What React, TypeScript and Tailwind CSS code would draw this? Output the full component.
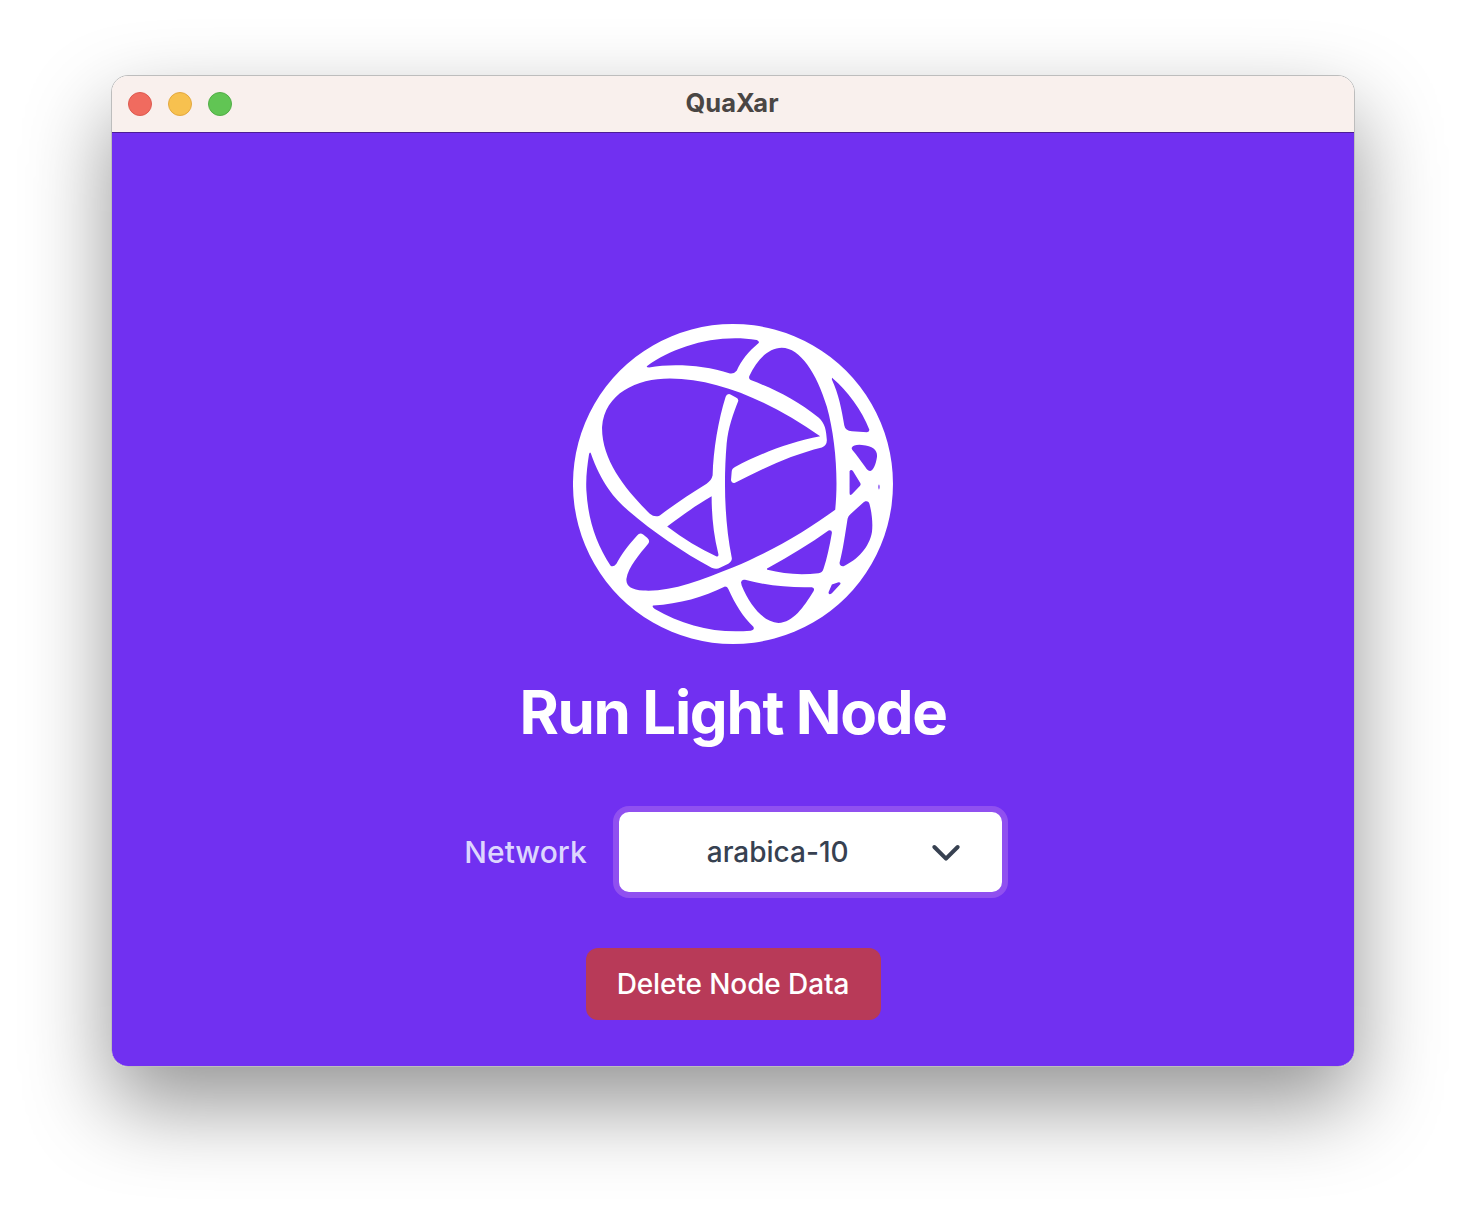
import React from "react";

const LOGO_PATH = [
  // outer disc
  "M519 42 A479 479 0 1 1 518.9 42 Z",
  // big connected region, runs from the left crescent through the centre
  "M93 428 C125 520 165 565 205 600 C280 665 370 725 455 772 Q470 778 480 772 L505 760 Q518 752 515 740 C495 640 490 520 500 400 C505 350 520 310 535 272 Q535 265 528 262 L510 252 Q500 250 497 260 C475 330 460 420 458 495 Q455 510 440 520 C390 550 340 585 300 615 Q285 622 270 610 C200 540 125 450 127 350 C135 250 230 205 330 205 C480 205 640 280 780 378 C690 395 600 430 525 470 Q515 475 515 485 L513 510 Q515 520 525 517 C610 475 690 435 785 412 Q800 405 800 390 C798 360 795 340 775 322 C710 270 640 235 572 210 Q565 205 568 198 C590 150 625 113 665 113 C720 113 770 190 800 290 C825 380 835 500 825 598 C740 660 640 720 520 770 C420 810 330 845 250 840 C215 838 198 825 200 805 C205 770 240 730 265 700 Q272 690 262 682 L250 672 Q240 665 232 675 C205 705 185 730 170 760 Q160 772 152 765 C110 700 85 630 80 540 C78 500 83 465 88 432 Q90 424 93 428 Z",
  // inner triangle
  "M455 558 C400 590 360 620 322 648 C370 685 420 715 470 738 Q477 740 475 730 C460 670 455 610 455 558 Z",
  // top crescent
  "M262 168 C340 110 470 70 590 90 Q600 95 595 100 C565 125 545 150 530 182 Q522 192 510 190 C430 165 340 160 268 172 Q258 172 262 168 Z",
  // right side cells
  "M818 205 C860 240 905 300 927 358 Q928 366 920 366 L875 363 Q855 362 852 345 C845 300 835 250 815 208 Q815 200 818 205 Z",
  "M875 412 Q880 402 905 404 C940 408 952 420 950 440 C947 460 940 480 930 482 Q922 482 915 470 C900 450 890 435 877 420 Q873 415 875 412 Z",
  "M868 483 Q872 476 878 482 L900 518 Q903 523 898 528 L875 552 Q868 558 868 548 Z",
  "M956 522 Q960 530 956 538 Q952 530 956 522 Z",
  "M915 573 Q925 570 928 582 C935 610 938 640 935 665 C928 710 890 750 850 767 Q838 768 838 757 C848 720 855 670 862 625 Q865 615 872 610 L905 580 Q910 575 915 573 Z",
  "M805 660 Q816 658 815 668 C808 710 800 745 790 775 Q786 788 775 788 C720 795 670 790 622 778 Q618 774 625 772 C690 735 750 700 805 660 Z",
  "M815 822 L835 815 Q843 815 840 821 L815 848 Q805 855 805 845 Z",
  // bottom cells
  "M543 815 Q545 805 555 808 C620 825 690 832 755 830 Q765 832 760 842 C730 890 700 935 655 937 C610 935 570 885 545 825 Z",
  "M280 885 C360 880 430 860 495 828 Q502 828 505 835 C525 880 550 920 580 948 Q585 958 572 960 C470 970 370 945 285 895 Q275 888 280 885 Z",
].join(" ");

function Logo() {
  return (
    <svg viewBox="40 42 958 958" className="h-[320px] w-[320px]" aria-label="QuaXar logo">
      <path d={LOGO_PATH} fill="#ffffff" fillRule="evenodd" />
    </svg>
  );
}

export default function App() {
  return (
    <div className="h-[1214px] overflow-hidden bg-white pt-[75px] font-['Inter',sans-serif]">
      {/* Window */}
      <div className="mx-auto h-[992px] w-[1244px] overflow-hidden rounded-[17px] border border-[#bdbdbd] shadow-[0_38px_85px_rgba(0,0,0,0.42)]">
        {/* Title bar */}
        <div className="relative flex h-[57px] items-center border-b border-[#4c1d95] bg-[#f9f0ed] pl-4">
          <div className="flex gap-4">
            <span className="h-6 w-6 rounded-full border border-[#dd5a50] bg-[#f06b5f]" />
            <span className="h-6 w-6 rounded-full border border-[#e3a83f] bg-[#f7c14f]" />
            <span className="h-6 w-6 rounded-full border border-[#52ad47] bg-[#61c554]" />
          </div>
          <span className="absolute inset-x-0 mb-[2px] pr-[2px] text-center text-[25.5px] font-bold text-[#4a4644]">QuaXar</span>
        </div>

        {/* Body */}
        <div className="flex h-[934px] flex-col items-center bg-[#7130f1] pt-[191px]">
          <Logo />
          <h1 className="mt-[38px] text-6xl font-bold tracking-[-1.35px] text-white">Run Light Node</h1>
          <div className="mt-[64px] ml-[6px] flex items-center gap-[26px]">
            <label className="text-[30px] font-medium text-[#ddd6fe]">Network</label>
            <div className="flex h-[92px] w-[395px] items-center rounded-2xl border-[6px] border-[#9050f0] bg-white pr-9 pl-[11px]">
              <span className="flex-1 text-center text-[28px] font-medium text-[#374151]">arabica-10</span>
              <svg viewBox="0 0 24 24" className="h-10 w-10" fill="none" stroke="#374151" strokeWidth="2.4" strokeLinecap="round" strokeLinejoin="round">
                <path d="M19 9l-7 7-7-7" />
              </svg>
            </div>
          </div>
          <button className="mt-[50px] h-[72px] w-[295px] rounded-xl bg-[#b83a58] text-[28px] font-medium tracking-[-0.1px] text-white">
            Delete Node Data
          </button>
        </div>
      </div>
    </div>
  );
}
